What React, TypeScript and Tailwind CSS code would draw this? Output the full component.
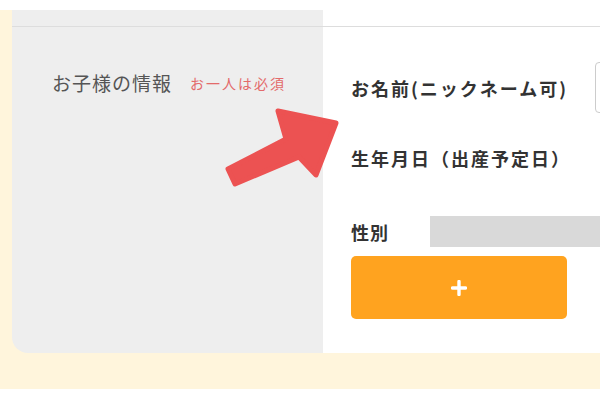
export default function App() {
  const jp = { fontFamily: '"Noto Sans CJK JP", "Noto Sans", sans-serif' };

  return (
    <div className="relative w-[600px] h-[400px] overflow-hidden bg-white pt-[10px]" style={jp}>
      {/* cream frame */}
      <div className="bg-[#fff5dc] pl-[12px] pb-[36px]">
        <div className="flex h-[343px]">
          {/* left column */}
          <div className="w-[311px] shrink-0 bg-[#eeeeee] rounded-bl-[16px] pt-[16px]">
            <div className="border-t border-[#dddddd] pt-[43px] pl-[40px] flex items-center gap-[18px]">
              <span className="text-[19px] leading-[26px] tracking-[1px] text-[#555555]">お子様の情報</span>
              <span className="text-[14px] leading-[26px] tracking-[2px] text-[#e36a6a]">お一人は必須</span>
            </div>
          </div>

          {/* right column */}
          <div className="flex-1 bg-white pt-[16px]">
            <div className="border-t border-[#dddddd] pl-[28px]">
              <div className="flex items-center mt-[35px] h-[51px]">
                <span className="w-[244px] shrink-0 text-[18px] leading-[26px] tracking-[2px] font-bold text-[#333333]">
                  お名前(ニックネーム可)
                </span>
                <div className="w-[200px] h-[51px] shrink-0 border border-[#cccccc] rounded-[4px] bg-white" />
              </div>

              <div className="mt-[32px] text-[18px] leading-[26px] tracking-[2px] font-bold text-[#333333]">
                生年月日（出産予定日）
              </div>

              <div className="flex items-center mt-[45px] h-[31px]">
                <span className="w-[79px] shrink-0 text-[18px] leading-[26px] tracking-[1px] font-bold text-[#333333]">
                  性別
                </span>
                <div className="w-[200px] h-[31px] shrink-0 bg-[#d9d9d9]" />
              </div>

              <button className="mt-[9px] w-[216px] h-[63px] rounded-[5px] bg-[#ffa31f] flex items-center justify-center">
                <svg width="16" height="16" viewBox="0 0 16 16">
                  <path d="M8 1.5v13M1.5 8h13" stroke="#ffffff" strokeWidth="3.4" strokeLinecap="round" />
                </svg>
              </button>
            </div>
          </div>
        </div>
      </div>

      {/* pointer arrow */}
      <svg className="absolute left-[220px] top-[100px]" width="130" height="95" viewBox="220 100 130 95">
        <polygon
          points="278,111 336,123 316,175 299,157 235,184 228,169 286,139"
          fill="#ec5252"
          stroke="#ec5252"
          strokeWidth="5"
          strokeLinejoin="round"
        />
      </svg>
    </div>
  );
}
